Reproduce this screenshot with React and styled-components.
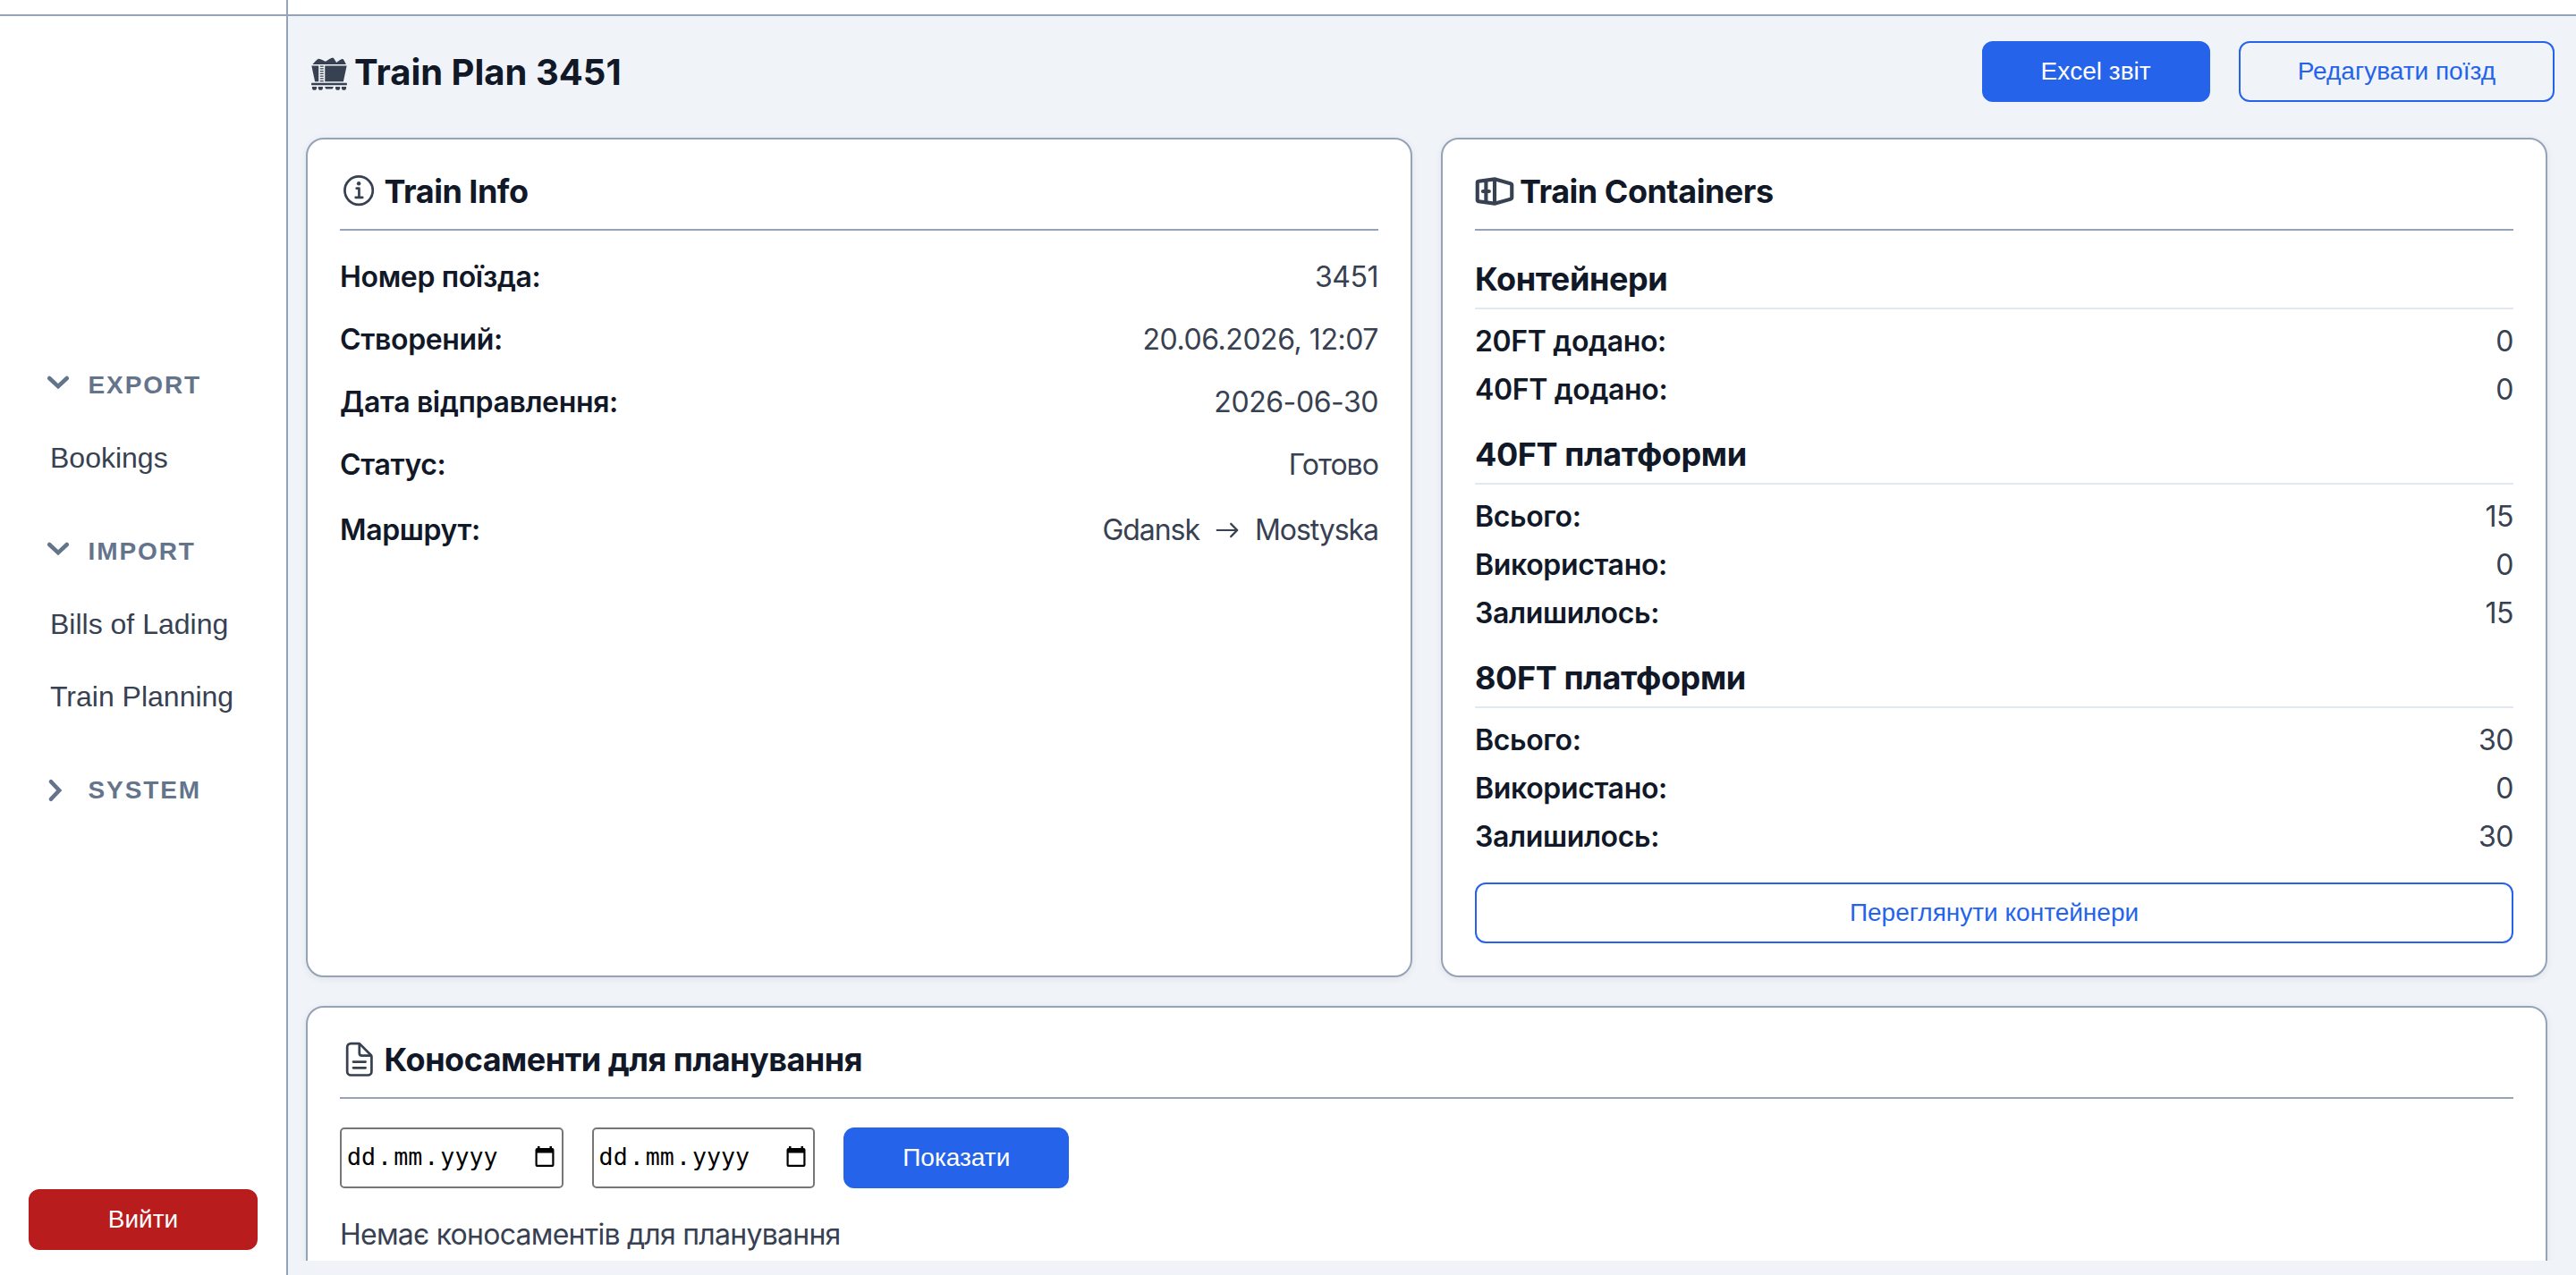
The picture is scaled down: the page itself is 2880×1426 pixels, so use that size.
import styled, { createGlobalStyle } from "styled-components";
import { GiCoalWagon } from "react-icons/gi";
import { PiShippingContainerBold } from "react-icons/pi";
import { IoInformationCircleOutline, IoDocumentTextOutline } from "react-icons/io5";
import { IoIosArrowRoundForward } from "react-icons/io";

const GlobalStyle = createGlobalStyle`
  *, *::before, *::after { box-sizing: border-box; }
  html, body { margin: 0; height: 100%; overflow: hidden; }
  body { font-family: Inter, "Liberation Sans", sans-serif; color: #374151; background: #fff; }
  h1, h2, h3, p { margin: 0; }
  svg { display: block; flex: none; }
`;

const Page = styled.div`
  display: flex;
  height: 100vh;
`;

const Sidebar = styled.aside`
  flex: none;
  width: 322px;
  display: flex;
  flex-direction: column;
  border-right: 2px solid #94a3b8;
`;

const TopBar = styled.div`
  flex: none;
  height: 18px;
  background: #fff;
  border-bottom: 2px solid #94a3b8;
`;

const Nav = styled.nav`
  flex: 1;
  padding: 383px 0 0 51px;
  font-family: "Liberation Sans", Arial, sans-serif;
`;

const NavGroup = styled.div`
  margin-bottom: 34px;
`;

const GroupLabel = styled.div`
  display: flex;
  align-items: center;
  gap: 19.5px;
  height: 60px;
  margin-bottom: 11px;
  color: #64748b;
  font-size: 28px;
  font-weight: 700;
  letter-spacing: 1.9px;

  svg { transform: rotate(${(p) => (p.$open ? "90deg" : "0deg")}); }
`;

const NavItem = styled.div`
  height: 81px;
  padding-left: 5px;
  font-size: 32px;
  line-height: 81px;
  color: #374151;
`;

const Button = styled.button`
  height: 68px;
  padding: 0 64px;
  border: 2px solid ${(p) => (p.$danger ? "#b91c1c" : "#2563eb")};
  border-radius: 12px;
  background: ${(p) => (p.$danger ? "#b91c1c" : p.$outline ? "transparent" : "#2563eb")};
  color: ${(p) => (p.$outline ? "#2563eb" : "#fff")};
  font: 400 28px "Liberation Sans", Arial, sans-serif;
  white-space: nowrap;
`;

const SidebarFooter = styled.div`
  display: grid;
  padding: 0 32px 28px;
`;

const Main = styled.main`
  flex: 1;
  min-width: 0;
  display: flex;
  flex-direction: column;
  background: #f0f4f9;
`;

const Content = styled.div`
  flex: 1;
  min-height: 0;
  margin-bottom: 16px;
  padding: 28px 24px 0 20px;
  overflow: hidden;
`;

const PageHeader = styled.header`
  display: flex;
  align-items: center;
  justify-content: space-between;
  height: 68px;
  padding-left: 4px;
  margin-bottom: 40px;
`;

const PageTitle = styled.h1`
  display: flex;
  align-items: center;
  gap: 6px;
  font-size: 40px;
  font-weight: 700;
  color: #111827;

  svg { margin-top: 1px; color: #374151; }
`;

const Actions = styled.div`
  display: flex;
  gap: 32px;
`;

const Cards = styled.div`
  display: grid;
  grid-template-columns: 1fr 1fr;
  gap: 32px;
  margin-right: 8px;
`;

const Card = styled.section`
  grid-column: ${(p) => (p.$wide ? "1 / -1" : "auto")};
  height: ${(p) => (p.$wide ? "400px" : "939px")};
  padding: 36px;
  border: 2px solid #94a3b8;
  border-radius: 20px;
  background: #fff;
  box-shadow: 0 2px 8px rgba(0, 0, 0, 0.07);
`;

const CardTitle = styled.h2`
  display: flex;
  align-items: center;
  gap: 6px;
  height: 66px;
  padding-bottom: 20px;
  margin-bottom: 32px;
  border-bottom: 2px solid #94a3b8;
  font-size: 36px;
  font-weight: 700;
  letter-spacing: -0.5px;
  color: #111827;

  svg { color: #374151; }
`;

const InfoRows = styled.div`
  display: flex;
  flex-direction: column;
  gap: 32px;
  padding-top: 1px;
`;

const StatRows = styled.div`
  display: flex;
  flex-direction: column;
  gap: 16px;
`;

const Row = styled.div`
  display: flex;
  align-items: center;
  justify-content: space-between;
  font-size: 32px;
  line-height: 38px;
`;

const Label = styled.span`
  font-weight: 600;
  letter-spacing: -0.35px;
  color: #111827;
`;

const Value = styled.span`
  letter-spacing: ${(p) => (p.$text ? "-0.95px" : "-0.45px")};
`;

const Route = styled.span`
  display: flex;
  align-items: center;
  gap: 9px;
  letter-spacing: -1.05px;
`;

const Group = styled.div`
  margin-bottom: ${(p) => (p.$last ? 32 : 31)}px;
`;

const GroupTitle = styled.h3`
  padding-bottom: 10px;
  margin-bottom: 17px;
  border-bottom: 2px solid #e2e8f0;
  font-size: 36px;
  line-height: 44px;
  font-weight: 700;
  letter-spacing: -0.4px;
  color: #111827;
`;

const FullWidth = styled.div`
  display: grid;
`;

const Filters = styled.div`
  display: flex;
  gap: 32px;
  margin-bottom: 33px;
`;

const DateField = styled.div`
  display: flex;
  align-items: center;
  justify-content: space-between;
  width: 249.6px;
  height: 68px;
  padding: 0 8px 2px 4px;
  border: 2px solid #767676;
  border-radius: 5px;
  background: #fff;
  color: #000;
  font: 26.67px "DejaVu Sans Mono", monospace;
`;

const DateParts = styled.span`
  display: flex;
  padding-bottom: 1px;
`;

const DatePart = styled.span`
  padding: 0 ${(p) => (p.$sep ? 0 : 2)}px;
`;

const Empty = styled.p`
  font-size: 32px;
  line-height: 38px;
  letter-spacing: -0.74px;
`;

const Chevron = () => (
  <svg width="28" height="28" viewBox="0 0 28 28" fill="none" stroke="currentColor" strokeWidth="4.6" strokeLinecap="round">
    <path d="M6 4.2 15.2 14 6 23.8" />
  </svg>
);

const CalendarIcon = () => (
  <svg width="22" height="24" viewBox="0 0 22 24">
    <path
      fill="currentColor"
      fillRule="evenodd"
      d="M3 0h2.500v2h11V0H19v2h.5A2 2 0 0 1 21.500 4v17a2 2 0 0 1-2 2h-17a2 2 0 0 1-2-2V4a2 2 0 0 1 2-2H3ZM2.700 7.500v13.300h16.600V7.500Z"
    />
  </svg>
);

const NAV = [
  { title: "EXPORT", items: ["Bookings"] },
  { title: "IMPORT", items: ["Bills of Lading", "Train Planning"] },
  { title: "SYSTEM", items: [] },
];

const INFO = [
  { label: "Номер поїзда:", value: "3451" },
  { label: "Створений:", value: "20.06.2026, 12:07" },
  { label: "Дата відправлення:", value: "2026-06-30" },
  { label: "Статус:", value: "Готово", text: true },
];

const GROUPS = [
  { title: "Контейнери", rows: [["20FT додано:", 0], ["40FT додано:", 0]] },
  { title: "40FT платформи", rows: [["Всього:", 15], ["Використано:", 0], ["Залишилось:", 15]] },
  { title: "80FT платформи", rows: [["Всього:", 30], ["Використано:", 0], ["Залишилось:", 30]] },
];

function DateInput() {
  return (
    <DateField>
      <DateParts>
        <DatePart>dd</DatePart>
        <DatePart $sep>.</DatePart>
        <DatePart>mm</DatePart>
        <DatePart $sep>.</DatePart>
        <DatePart>yyyy</DatePart>
      </DateParts>
      <CalendarIcon />
    </DateField>
  );
}

export default function App() {
  return (
    <Page>
      <GlobalStyle />
      <Sidebar>
        <TopBar />
        <Nav>
          {NAV.map((group) => (
            <NavGroup key={group.title}>
              <GroupLabel $open={group.items.length > 0}>
                <Chevron />
                {group.title}
              </GroupLabel>
              {group.items.map((item) => (
                <NavItem key={item}>{item}</NavItem>
              ))}
            </NavGroup>
          ))}
        </Nav>
        <SidebarFooter>
          <Button $danger>Вийти</Button>
        </SidebarFooter>
      </Sidebar>
      <Main>
        <TopBar />
        <Content>
          <PageHeader>
            <PageTitle>
              <GiCoalWagon size={44} />
              Train Plan 3451
            </PageTitle>
            <Actions>
              <Button>Excel звіт</Button>
              <Button $outline>Редагувати поїзд</Button>
            </Actions>
          </PageHeader>
          <Cards>
            <Card>
              <CardTitle>
                <IoInformationCircleOutline size={43.6} />
                Train Info
              </CardTitle>
              <InfoRows>
                {INFO.map(({ label, value, text }) => (
                  <Row key={label}>
                    <Label>{label}</Label>
                    <Value $text={text}>{value}</Value>
                  </Row>
                ))}
                <Row>
                  <Label>Маршрут:</Label>
                  <Route>
                    <span>Gdansk</span>
                    <IoIosArrowRoundForward size={44} />
                    <span>Mostyska</span>
                  </Route>
                </Row>
              </InfoRows>
            </Card>
            <Card>
              <CardTitle>
                <PiShippingContainerBold size={44} />
                Train Containers
              </CardTitle>
              {GROUPS.map((group, i) => (
                <Group key={group.title} $last={i === GROUPS.length - 1}>
                  <GroupTitle>{group.title}</GroupTitle>
                  <StatRows>
                    {group.rows.map(([label, value]) => (
                      <Row key={label}>
                        <Label>{label}</Label>
                        <Value>{value}</Value>
                      </Row>
                    ))}
                  </StatRows>
                </Group>
              ))}
              <FullWidth>
                <Button $outline>Переглянути контейнери</Button>
              </FullWidth>
            </Card>
            <Card $wide>
              <CardTitle>
                <IoDocumentTextOutline size={43.6} />
                Коносаменти для планування
              </CardTitle>
              <Filters>
                <DateInput />
                <DateInput />
                <Button>Показати</Button>
              </Filters>
              <Empty>Немає коносаментів для планування</Empty>
            </Card>
          </Cards>
        </Content>
      </Main>
    </Page>
  );
}
